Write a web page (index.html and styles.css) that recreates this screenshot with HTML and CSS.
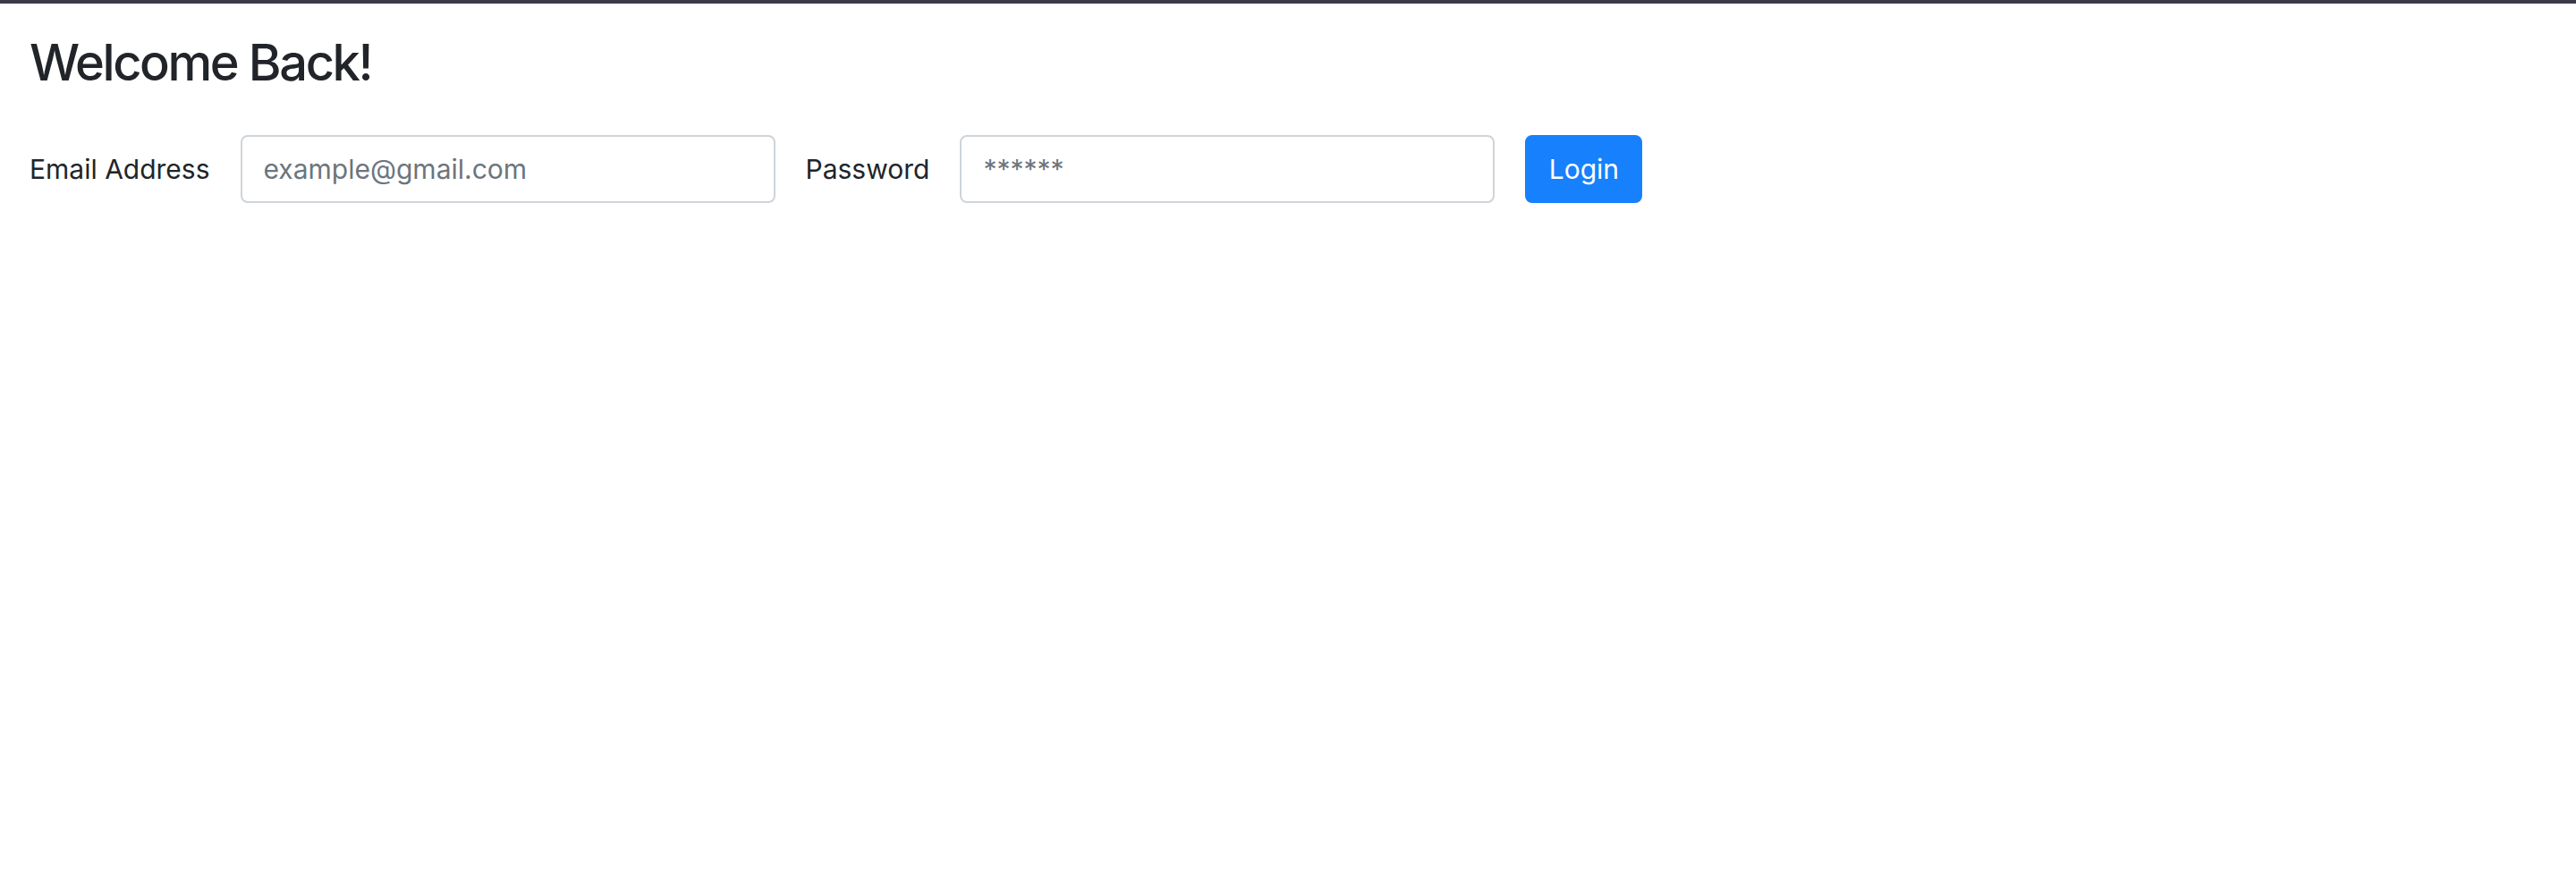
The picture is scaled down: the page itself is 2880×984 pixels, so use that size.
FILE: index.html
```html
<!DOCTYPE html>
<html lang="en">
<head>
<meta charset="utf-8">
<title>Welcome Back</title>
<link rel="stylesheet" href="styles.css">
</head>
<body>
<div class="topbar"></div>
<main class="page">
  <h3 class="title">Welcome Back!</h3>
  <form class="login-form">
    <label class="field-label" for="email">Email Address</label>
    <input class="field-input" id="email" type="email" placeholder="example@gmail.com">
    <label class="field-label" for="password">Password</label>
    <input class="field-input" id="password" type="password" placeholder="******">
    <button class="btn-login" type="button">Login</button>
  </form>
</main>
</body>
</html>
```

FILE: styles.css
```css
* { box-sizing: border-box; }
html, body {
  margin: 0;
  padding: 0;
  background: #ffffff;
}
body {
  font-family: Inter, "Noto Sans", "Liberation Sans", sans-serif;
  color: #212529;
}
.topbar {
  height: 4px;
  background: #3b3a4a;
}
.page {
  padding: 33px 33px 0 33px;
}
.title {
  margin: 0 0 47px 0;
  font-size: 56px;
  font-weight: 500;
  line-height: 67px;
  letter-spacing: -2.4px;
  color: #212529;
}
.login-form {
  display: flex;
  align-items: center;
}
.field-label {
  font-size: 30px;
  line-height: 48px;
  margin-right: 34px;
}
.field-input {
  width: 598px;
  height: 76px;
  padding: 12px 24px;
  border: 2px solid #ced4da;
  border-radius: 8px;
  font-family: inherit;
  font-size: 30px;
  color: #495057;
  margin-right: 34px;
  outline: none;
}
.field-input::placeholder {
  color: #6c757d;
  opacity: 1;
}
.btn-login {
  height: 76px;
  width: 131px;
  padding: 0;
  border: 2px solid #1780fc;
  border-radius: 8px;
  background: #1780fc;
  color: #ffffff;
  font-family: inherit;
  font-size: 30px;
}
```
